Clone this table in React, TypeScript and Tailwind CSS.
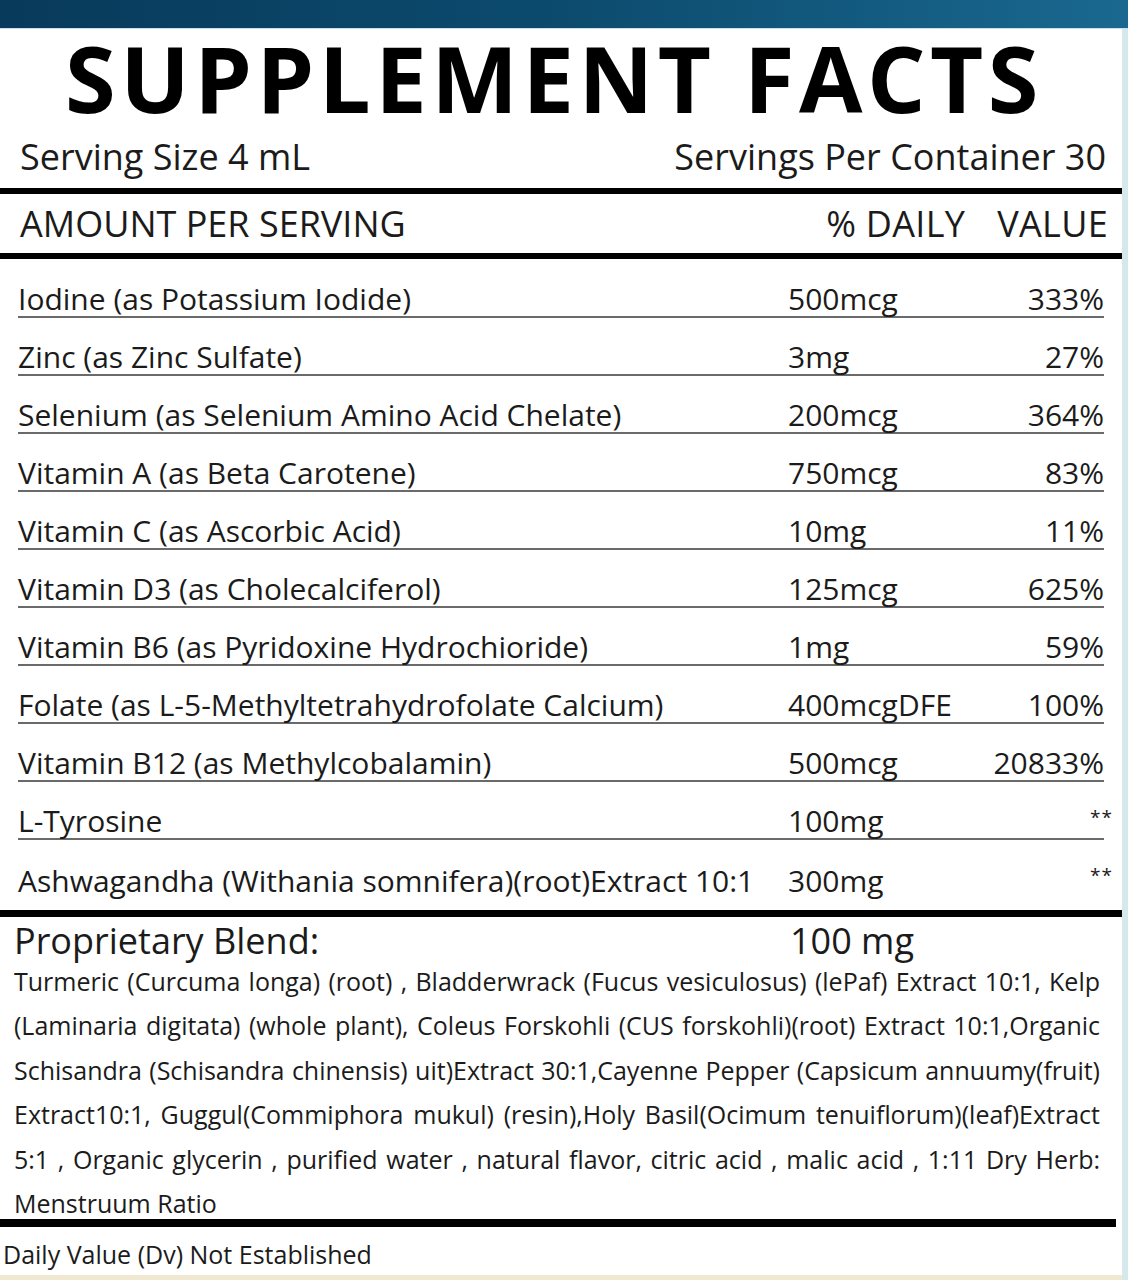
const rows = [
  { name: "Iodine (as Potassium Iodide)", amount: "500mcg", dv: "333%" },
  { name: "Zinc (as Zinc Sulfate)", amount: "3mg", dv: "27%" },
  { name: "Selenium (as Selenium Amino Acid Chelate)", amount: "200mcg", dv: "364%" },
  { name: "Vitamin A (as Beta Carotene)", amount: "750mcg", dv: "83%" },
  { name: "Vitamin C (as Ascorbic Acid)", amount: "10mg", dv: "11%" },
  { name: "Vitamin D3 (as Cholecalciferol)", amount: "125mcg", dv: "625%" },
  { name: "Vitamin B6 (as Pyridoxine Hydrochioride)", amount: "1mg", dv: "59%" },
  { name: "Folate (as L-5-Methyltetrahydrofolate Calcium)", amount: "400mcgDFE", dv: "100%" },
  { name: "Vitamin B12 (as Methylcobalamin)", amount: "500mcg", dv: "20833%" },
  { name: "L-Tyrosine", amount: "100mg", dv: "**" },
  { name: "Ashwagandha (Withania somnifera)(root)Extract 10:1", amount: "300mg", dv: "**" },
];

const blendLines = [
  "Turmeric (Curcuma longa) (root) , Bladderwrack  (Fucus vesiculosus) (lePaf) Extract 10:1, Kelp",
  "(Laminaria digitata) (whole plant), Coleus Forskohli (CUS forskohli)(root) Extract 10:1,Organic",
  "Schisandra (Schisandra chinensis) uit)Extract 30:1,Cayenne Pepper (Capsicum annuumy(fruit)",
  "Extract10:1, Guggul(Commiphora mukul) (resin),Holy Basil(Ocimum tenuiflorum)(leaf)Extract",
  "5:1 , Organic glycerin , purified water , natural flavor, citric acid , malic acid , 1:11 Dry Herb:",
];

function NutrientRow({ name, amount, dv, last }: { name: string; amount: string; dv: string; last: boolean }) {
  const stars = dv === "**";
  return (
    <div
      className={
        "flex h-[58px] items-end pb-[2px] ml-[18px] w-[1086px] text-[30px] leading-none " +
        (last ? "" : "border-b-2 border-[#6a6a6a]")
      }
    >
      <span className="w-[770px] whitespace-nowrap">{name}</span>
      <span className="flex-1 whitespace-nowrap">{amount}</span>
      {stars ? (
        <span className="self-start mt-[26px] -mr-[9px] text-[19px] tracking-[1px]">**</span>
      ) : (
        <span className="whitespace-nowrap">{dv}</span>
      )}
    </div>
  );
}

export default function App() {
  return (
    <div className="w-[1128px] h-[1280px] flex flex-col bg-white text-[#1b1b1b] font-['Open_Sans','Noto_Sans',sans-serif] overflow-hidden">
      <div className="h-[29px] shrink-0 bg-gradient-to-r from-[#083a5b] via-[#0c4b6e] to-[#1a6890] border-b border-[#c7e2e8]" />
      <div className="flex-1 flex border-r-[6px] border-[#d5e8ea]">
        <div className="flex-1 flex flex-col">
          <h1 className="h-[101px] flex items-center justify-center pr-[14px] pb-[3px] text-[92px] font-bold tracking-[4.5px] leading-none text-black">
            SUPPLEMENT FACTS
          </h1>
          <div className="h-[58px] flex items-center justify-between pl-[20px] pr-[16px] pb-[4px] text-[36px] leading-none">
            <span>Serving Size 4 mL</span>
            <span>Servings Per Container 30</span>
          </div>
          <div className="h-[6px] bg-black" />
          <div className="h-[59px] flex items-center justify-between pl-[20px] pr-[14px] text-[36px] leading-none">
            <span>AMOUNT PER SERVING</span>
            <span className="flex gap-[32px] tracking-[0.3px]">
              <span>% DAILY</span>
              <span>VALUE</span>
            </span>
          </div>
          <div className="h-[6px] bg-black" />
          <div className="pt-[1px]">
            {rows.map((r, i) => (
              <NutrientRow key={r.name} {...r} last={i === rows.length - 1} />
            ))}
          </div>
          <div className="h-[12px]" />
          <div className="h-[7px] bg-black" />
          <div className="flex items-end h-[42px] pl-[14px] text-[36px] leading-none">
            <span className="w-[776px]">Proprietary Blend:</span>
            <span>100 mg</span>
          </div>
          <div className="pl-[14px] w-[1100px] text-[25px]">
            {blendLines.map((l) => (
              <div key={l} className="h-[44.4px] leading-[44.4px] whitespace-nowrap text-justify [text-align-last:justify]">
                {l}
              </div>
            ))}
            <div className="h-[37.6px] leading-[44.4px]">Menstruum Ratio</div>
          </div>
          <div className="h-[8px] bg-black mr-[6px]" />
          <div className="h-[48px] shrink-0 flex items-center pt-[8px] pl-[3px] text-[25px] leading-none">
            Daily Value (Dv) Not Established
          </div>
          <div className="flex-1 bg-[#f1e8d2]" />
        </div>
      </div>
    </div>
  );
}
